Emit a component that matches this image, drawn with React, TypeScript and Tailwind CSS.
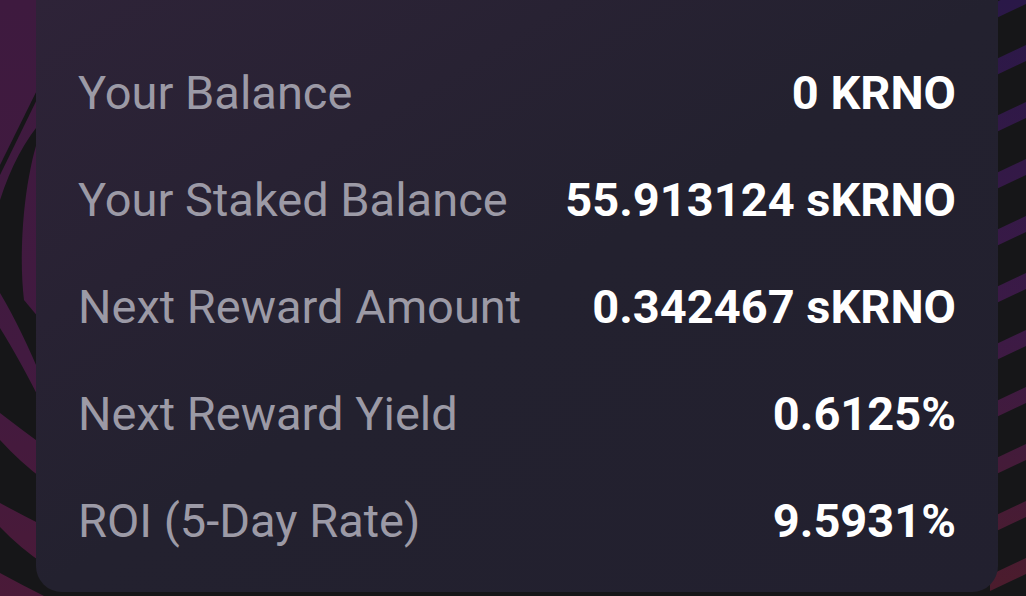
import React from 'react';

// ─── Datos de la tarjeta ─────────────────────────────────────────────────────

const ROWS: { label: string; value: string }[] = [
  { label: 'Your Balance', value: '0 KRNO' },
  { label: 'Your Staked Balance', value: '55.913124 sKRNO' },
  { label: 'Next Reward Amount', value: '0.342467 sKRNO' },
  { label: 'Next Reward Yield', value: '0.6125%' },
  { label: 'ROI (5-Day Rate)', value: '9.5931%' },
];

// ─── Fondo decorativo (arcos a la izquierda, franjas a la derecha) ───────────

function Backdrop() {
  const stripes = Array.from({ length: 12 }, (_, i) => i * 57 + 1);
  return (
    <svg className="absolute inset-0" width="1026" height="596" viewBox="0 0 1026 596">
      <defs>
        <linearGradient id="stripeGrad" x1="0" y1="0" x2="0" y2="596" gradientUnits="userSpaceOnUse">
          <stop offset="0" stopColor="#2a1848" />
          <stop offset="0.55" stopColor="#3c1a46" />
          <stop offset="1" stopColor="#4c1c2c" />
        </linearGradient>
        <linearGradient id="arcGrad" x1="0" y1="0" x2="0" y2="596" gradientUnits="userSpaceOnUse">
          <stop offset="0" stopColor="#3e1a3f" />
          <stop offset="0.6" stopColor="#421a40" />
          <stop offset="1" stopColor="#4a1a38" />
        </linearGradient>
      </defs>
      <rect width="1026" height="596" fill="#161618" />

      {/* izquierda: bandas curvas */}
      <g fill="url(#arcGrad)">
        <path d="M0,0 L44,0 L44,118 Q16,150 0,200 Z" />
        <path d="M44,123 C24,170 18,250 24,300 L44,324 Z" />
        <path d="M0,293 Q22,330 44,384 L44,408 Q20,360 0,328 Z" />
        <path d="M0,413 Q22,430 44,446 L44,480 Q20,462 0,440 Z" />
        <path d="M0,503 Q22,515 44,526 L44,564 Q20,548 0,527 Z" />
        <path d="M0,573 Q22,585 44,596 L0,596 Z" />
      </g>
      <polygon points="44,76 44,85 0,175 0,165" fill="#161618" />

      {/* derecha: franjas diagonales */}
      {stripes.map((y) => (
        <polygon
          key={y}
          points={`990,${y + 4} 1026,${y - 13} 1026,${y + 3} 990,${y + 20}`}
          fill="url(#stripeGrad)"
        />
      ))}
    </svg>
  );
}

// ─── Página ──────────────────────────────────────────────────────────────────

export default function App() {
  return (
    <main
      className="relative h-[596px] w-[1026px] overflow-hidden bg-[#161618]"
      style={{ fontFamily: 'Roboto, "Liberation Sans", sans-serif' }}
    >
      <Backdrop />

      <div className="relative ml-[36px] w-[962px] rounded-b-[26px] bg-gradient-to-br from-[#2e2338] via-[#23212f] to-[#22202f] px-[42px] pt-[40px] pb-[17px]">
        {ROWS.map((row) => (
          <div key={row.label} className="flex h-[107px] items-center justify-between">
            <span className="text-[47px] font-normal text-[#9c9aa6]">{row.label}</span>
            <span className="text-[47px] font-bold text-white">{row.value}</span>
          </div>
        ))}
      </div>
    </main>
  );
}
